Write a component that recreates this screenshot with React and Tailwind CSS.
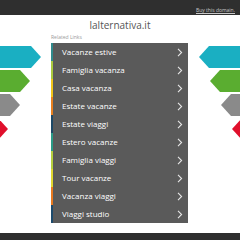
const links = [
  { label: "Vacanze estive", color: "bg-[#2f8a8c]" },
  { label: "Famiglia vacanza", color: "bg-[#a9c93d]" },
  { label: "Casa vacanza", color: "bg-[#f0c419]" },
  { label: "Estate vacanze", color: "bg-[#e8801f]" },
  { label: "Estate viaggi", color: "bg-[#1d4866]" },
  { label: "Estero vacanze", color: "bg-[#2a9a86]" },
  { label: "Famiglia viaggi", color: "bg-[#b5cf3e]" },
  { label: "Tour vacanze", color: "bg-[#dfd630]" },
  { label: "Vacanza viaggi", color: "bg-[#e8791f]" },
  { label: "Viaggi studio", color: "bg-[#1d4a6c]" },
];

function Chevron() {
  return (
    <svg width="6" height="9" viewBox="0 0 6 9" fill="none">
      <polyline points="1,0.8 4.6,4.5 1,8.2" stroke="#e6e6e6" strokeWidth="1.1" />
    </svg>
  );
}

export default function App() {
  return (
    <div className="w-[240px] h-[240px] bg-white flex flex-col overflow-hidden font-['Open_Sans',sans-serif]">
      {/* top bar */}
      <div className="h-[15px] bg-[#2f2f2f] flex items-end justify-end pr-[5px] pb-[2px]">
        <span className="text-[5px] leading-none text-[#c8c8c8] underline">Buy this domain.</span>
      </div>

      {/* title */}
      <div className="h-[20px] flex items-center justify-center">
        <h1 className="text-[10px] leading-none text-[#555]">lalternativa.it</h1>
      </div>

      <div className="h-[8px] pl-[51px]">
        <span className="text-[5px] leading-none text-[#9a9a9a] block">Related Links</span>
      </div>

      {/* main */}
      <div className="flex h-[180px]">
        <div className="w-[51px] pt-[3px]">
          <svg width="51" height="100" viewBox="0 0 51 100">
            <polygon points="0,0 31,0 41,11 31,22 0,22" fill="#1aafc2" />
            <polygon points="0,24 20,24 30,35 20,46 0,46" fill="#5aad30" />
            <polygon points="0,48 10,48 20,59 10,70 0,70" fill="#8a8a8a" />
            <polygon points="-2,72 8,83 -2,94" fill="#e0102c" />
          </svg>
        </div>

        <ul className="w-[137px] bg-[#5a5a5a] flex flex-col">
          {links.map((l) => (
            <li key={l.label} className="h-[18px] flex items-center">
              <span className={`w-[2px] h-full ${l.color}`} />
              <span className="flex-1 pl-[9px] text-[8px] leading-none text-white">{l.label}</span>
              <span className="pr-[5px] flex items-center">
                <Chevron />
              </span>
            </li>
          ))}
        </ul>

        <div className="w-[52px] pt-[3px]">
          <svg width="52" height="100" viewBox="0 0 52 100">
            <polygon points="11,11 21,0 52,0 52,22 21,22" fill="#1aafc2" />
            <polygon points="22,35 32,24 52,24 52,46 32,46" fill="#5aad30" />
            <polygon points="33,59 43,48 52,48 52,70 43,70" fill="#8a8a8a" />
            <polygon points="44,83 54,72 54,94" fill="#e0102c" />
          </svg>
        </div>
      </div>

      <div className="h-[10px]" />
      <div className="flex-1 bg-[#2f2f2f]" />
    </div>
  );
}
